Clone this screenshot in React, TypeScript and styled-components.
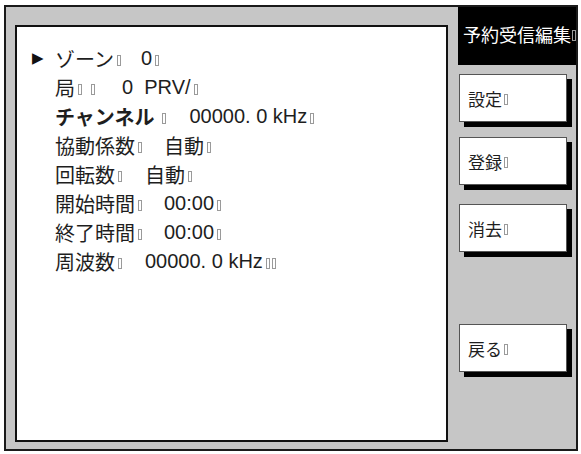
import React from 'react';
import styled, { createGlobalStyle } from 'styled-components';

const GlobalStyle = createGlobalStyle`
  html, body {
    margin: 0;
    padding: 0;
    background: #ffffff;
  }
  body {
    font-family: "Liberation Sans", "Noto Sans CJK JP", sans-serif;
    color: #1e1e1e;
  }
`;

const Frame = styled.div`
  box-sizing: border-box;
  margin: 5px 0 0 4px;
  width: 574px;
  height: 446px;
  border: 2px solid #1a1a1a;
  background: #c6c6c6;
  display: flex;
  align-items: flex-start;
`;

const Panel = styled.div`
  box-sizing: border-box;
  margin: 18px 0 0 9px;
  width: 433px;
  height: 417px;
  border: 2px solid #111;
  background: #fff;
  padding: 17px 0 0 15px;
`;

const Row = styled.div`
  display: flex;
  align-items: center;
  height: 29px;
  font-size: 20px;
  white-space: pre;
`;

const Marker = styled.span`
  width: 23px;
  font-family: "DejaVu Sans", sans-serif;
  font-size: 15px;
  color: #111;
  margin-top: -2px;
`;

const Label = styled.span<{ $bold?: boolean }>`
  font-weight: ${(p) => (p.$bold ? 700 : 400)};
  font-size: 20px;
`;

const Value = styled.span<{ $gap: number }>`
  margin-left: ${(p) => p.$gap}px;
`;

const Tofu = styled.span<{ $gap?: number }>`
  display: inline-block;
  box-sizing: border-box;
  width: 4px;
  height: 11px;
  border: 1px solid #9a9a9a;
  margin-left: ${(p) => p.$gap ?? 3}px;
  margin-top: 3px;
`;

const Sidebar = styled.div`
  margin-left: 10px;
  width: 118px;
  display: flex;
  flex-direction: column;
`;

const Title = styled.div`
  height: 58px;
  background: #000;
  color: #fff;
  font-size: 18px;
  display: flex;
  align-items: center;
  padding-left: 5px;
  padding-bottom: 4px;
  box-sizing: border-box;
  white-space: nowrap;
`;

const SideButton = styled.button<{ $top: number }>`
  box-sizing: border-box;
  margin: ${(p) => p.$top}px 0 0 1px;
  width: 108px;
  height: 48px;
  border: 1px solid #555;
  background: #fff;
  box-shadow: 5px 5px 0 #000;
  padding: 0 0 0 8px;
  display: flex;
  align-items: center;
  font-family: "Liberation Sans", "Noto Sans CJK JP", sans-serif;
  font-size: 17px;
  color: #1e1e1e;
`;

type Item = {
  label: string;
  bold?: boolean;
  tofuGap?: number;
  extraTofu?: number;
  value: string;
  valueGap: number;
  endTofus: number;
  active?: boolean;
};

const items: Item[] = [
  { label: 'ゾーン', value: '0', valueGap: 20, endTofus: 1, active: true },
  { label: '局', extraTofu: 9, value: '0  PRV/', valueGap: 27, endTofus: 1 },
  { label: 'チャンネル', bold: true, tofuGap: 8, value: '00000. 0 kHz', valueGap: 23, endTofus: 1 },
  { label: '協動係数', value: '自動', valueGap: 22, endTofus: 1 },
  { label: '回転数', value: '自動', valueGap: 23, endTofus: 1 },
  { label: '開始時間', value: '00:00', valueGap: 22, endTofus: 1 },
  { label: '終了時間', value: '00:00', valueGap: 22, endTofus: 1 },
  { label: '周波数', value: '00000. 0 kHz', valueGap: 23, endTofus: 2 },
];

const buttons = [
  { label: '設定', top: 9 },
  { label: '登録', top: 15 },
  { label: '消去', top: 19 },
  { label: '戻る', top: 72 },
];

const App: React.FC = () => {
  return (
    <>
      <GlobalStyle />
      <Frame>
        <Panel>
          {items.map((item) => (
            <Row key={item.label}>
              <Marker>{item.active ? '▶' : ''}</Marker>
              <Label $bold={item.bold}>{item.label}</Label>
              <Tofu $gap={item.tofuGap} />
              {item.extraTofu !== undefined && <Tofu $gap={item.extraTofu} />}
              <Value $gap={item.valueGap}>{item.value}</Value>
              {Array.from({ length: item.endTofus }).map((_, i) => (
                <Tofu key={i} $gap={i === 0 ? 3 : 2} />
              ))}
            </Row>
          ))}
        </Panel>
        <Sidebar>
          <Title>
            予約受信編集
            <Tofu $gap={1} />
          </Title>
          {buttons.map((b) => (
            <SideButton key={b.label} $top={b.top}>
              {b.label}
              <Tofu $gap={2} />
            </SideButton>
          ))}
        </Sidebar>
      </Frame>
    </>
  );
};

export default App;
